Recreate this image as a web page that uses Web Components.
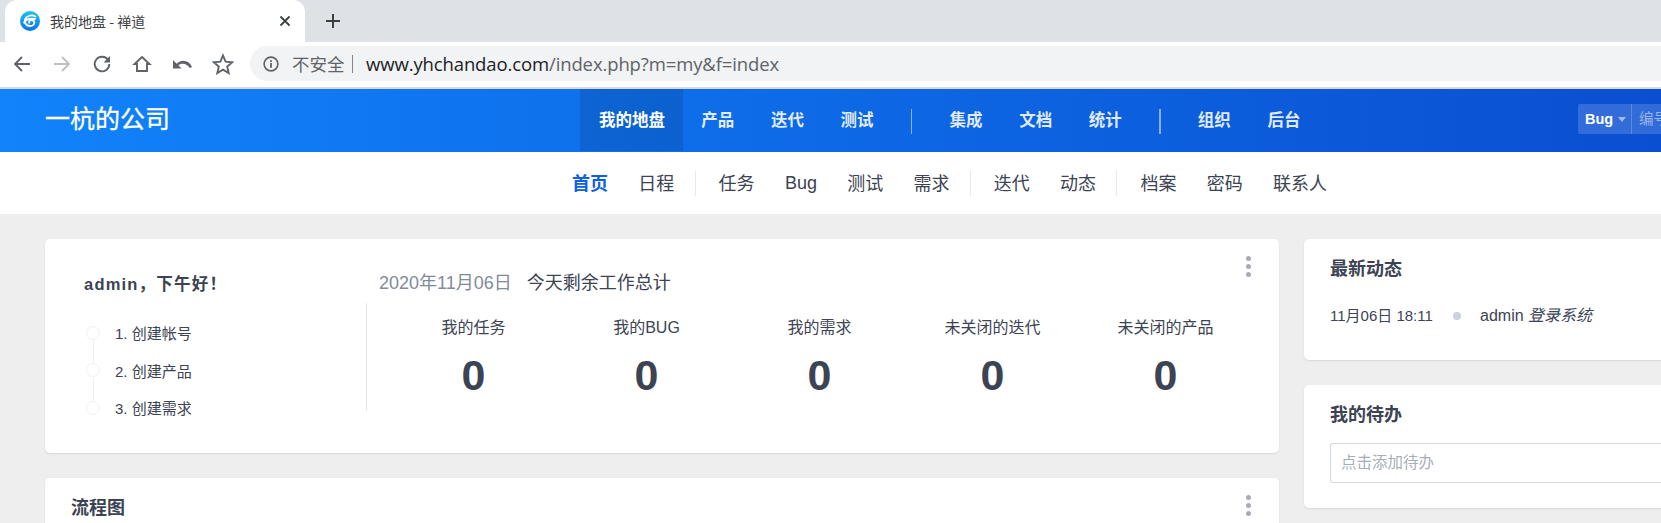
<!DOCTYPE html>
<html lang="zh"><head><meta charset="utf-8"><title>我的地盘 - 禅道</title>
<style>
html,body{margin:0;padding:0;height:523px;width:1661px;overflow:hidden;background:#eee;}
body{font-family:"Liberation Sans","Noto Sans CJK SC",sans-serif;color:#3c4353;}
</style></head><body>
<browser-chrome></browser-chrome>
<app-header>
  <top-nav-item active>我的地盘</top-nav-item><top-nav-item>产品</top-nav-item><top-nav-item>迭代</top-nav-item><top-nav-item>测试</top-nav-item>
  <nav-sep></nav-sep>
  <top-nav-item>集成</top-nav-item><top-nav-item>文档</top-nav-item><top-nav-item>统计</top-nav-item>
  <nav-sep></nav-sep>
  <top-nav-item>组织</top-nav-item><top-nav-item>后台</top-nav-item>
</app-header>
<sub-nav>
  <sub-item active>首页</sub-item><sub-item>日程</sub-item><sub-sep></sub-sep>
  <sub-item>任务</sub-item><sub-item style="padding-bottom:0">Bug</sub-item><sub-item>测试</sub-item><sub-item>需求</sub-item><sub-sep></sub-sep>
  <sub-item>迭代</sub-item><sub-item>动态</sub-item><sub-sep></sub-sep>
  <sub-item>档案</sub-item><sub-item>密码</sub-item><sub-item>联系人</sub-item>
</sub-nav>
<dash-board>
  <div slot="left">
    <panel-card menu style="height:214px">
      <welcome-block></welcome-block>
    </panel-card>
    <panel-card menu heading="流程图" style="height:100px"></panel-card>
  </div>
  <div slot="right">
    <panel-card heading="最新动态" style="height:121px">
      <activity-row></activity-row>
    </panel-card>
    <panel-card heading="我的待办" style="height:123px">
      <todo-input></todo-input>
    </panel-card>
  </div>
</dash-board>
<script>
function def(name, html, init){
  customElements.define(name, class extends HTMLElement{
    constructor(){super();this.attachShadow({mode:'open'}).innerHTML=html;if(init)init(this);}
  });
}
def('browser-chrome',`<style>
:host{display:block;height:89px;background:#fff;font-family:"Noto Sans CJK SC",sans-serif;}
.tabs{height:42px;background:#dee1e6;display:flex;align-items:center;padding-left:5px;box-sizing:border-box;}
.tab{width:300px;height:42px;background:#fff;border-radius:12px 12px 0 0;display:flex;align-items:center;box-sizing:border-box;padding:0 14px 0 15px;font-size:14px;color:#3c4043;}
.tab svg.fav{margin-right:10px;flex:none}
.tab span{flex:1;padding-bottom:1px;}
.plus{margin-left:20px;display:flex}
.bar{display:flex;align-items:center;box-sizing:border-box;padding-left:12px;border-bottom:2px solid #d9d9d9;height:47px;padding-bottom:2px;}
.ic{width:40px;display:flex;flex:none;}
.omni{margin-left:10px;flex:1;height:35px;background:#f1f3f4;border-radius:18px 0 0 18px;display:flex;align-items:center;padding-left:13px;font-size:17.5px;white-space:nowrap;}
.omni .ns{color:#5f6368;margin-left:13px;}
.omni .bar2{width:1.5px;height:18px;background:#80868b;margin:0 13px 0 7px;}
.omni .host,.omni .path{font-family:"Open Sans",sans-serif;letter-spacing:-.12px;font-size:18.5px}
.omni .host{color:#202124;}
.omni .path{color:#5f6368;}
</style>
<div class="tabs"><div class="tab">
<svg class="fav" width="20" height="20" viewBox="0 0 20 20"><defs><linearGradient id="fg" x1="0" y1="0" x2="0" y2="1"><stop offset="0" stop-color="#1cc4f0"/><stop offset="1" stop-color="#0a72e8"/></linearGradient></defs><circle cx="10" cy="10" r="10" fill="url(#fg)"/><path d="M15.5 5.5C12 3.5 6.5 4.5 5 8.5c-1 3 1 6.500 5 6.500 3 0 4.500-1.800 4.300-3.600-.2-1.700-2-2.600-3.700-2.100-1.300.4-1.900 1.500-1.400 2.400M4 11.500c2-3 6.500-4.500 11-3.500" fill="none" stroke="#fff" stroke-width="1.8" stroke-linecap="round"/></svg>
<span>我的地盘 - 禅道</span>
<svg width="12" height="12" viewBox="0 0 12 12"><path d="M1.500 1.500l9 9M10.500 1.500l-9 9" stroke="#3c4043" stroke-width="1.8" fill="none"/></svg>
</div>
<div class="plus"><svg width="16" height="16" viewBox="0 0 16 16"><path d="M8 1v14M1 8h14" stroke="#3c4043" stroke-width="2" fill="none"/></svg></div></div>
<div class="bar">
<div class="ic"><svg width="20" height="20" viewBox="0 0 20 20"><path d="M18 10H3M10 3l-7 7 7 7" fill="none" stroke="#5f6368" stroke-width="1.9"/></svg></div>
<div class="ic"><svg width="20" height="20" viewBox="0 0 20 20"><path d="M2 10h15M10 3l7 7-7 7" fill="none" stroke="#bdc1c6" stroke-width="1.9"/></svg></div>
<div class="ic"><svg width="20" height="20" viewBox="0 0 20 20"><path d="M16.200 6.200A7.300 7.300 0 1 0 17.300 10" fill="none" stroke="#5f6368" stroke-width="1.9"/><path d="M18 2v6.500h-6.500z" fill="#5f6368"/></svg></div>
<div class="ic"><svg width="20" height="20" viewBox="0 0 20 20"><path d="M10 3l7.500 7H15v7H5v-7H2.500z" fill="none" stroke="#5f6368" stroke-width="1.9"/></svg></div>
<div class="ic"><svg width="22" height="20" viewBox="0 0 22 20"><path d="M1 6v8.500h8.500l-3.200-3.200c3.800-3 9-1.500 11.500 2.700l2.200-1.100C17 6.500 10.200 4.800 4.700 9.700z" fill="#5f6368"/></svg></div>
<div class="ic" style="width:28px"><svg width="22" height="22" viewBox="0 0 22 22"><path d="M11 2.500l2.600 6.100 6.600.6-5 4.400 1.500 6.500L11 16.700l-5.700 3.400 1.500-6.500-5-4.400 6.600-.6z" fill="none" stroke="#5f6368" stroke-width="1.9"/></svg></div>
<div class="omni">
<svg width="16" height="16" viewBox="0 0 16 16"><circle cx="8" cy="8" r="6.900" fill="none" stroke="#5f6368" stroke-width="1.6"/><rect x="7.100" y="7" width="1.800" height="4.800" fill="#5f6368"/><rect x="7.100" y="4.200" width="1.800" height="1.800" fill="#5f6368"/></svg>
<span class="ns">不安全</span><i class="bar2"></i><span class="host">www.yhchandao.com</span><span class="path">/index.php?m=my&amp;f=index</span>
</div></div>`);
def('app-header',`<style>
:host{display:flex;height:63px;box-sizing:border-box;background:linear-gradient(90deg,#1183fb,#0a4fd0);color:#fff;align-items:stretch;overflow:hidden;}
.brand{width:580px;flex:none;box-sizing:border-box;padding-left:45px;font-size:25px;line-height:61px;font-weight:400;white-space:nowrap;-webkit-text-stroke:.3px #fff}
nav{display:flex;align-items:flex-start;width:998px;flex:none;}
.s{display:flex;height:30px;margin-top:15px;border-radius:2px;background:rgba(255,255,255,.16);flex:none;width:120px;font-size:14.5px;line-height:31px;}
.t{width:54px;box-sizing:border-box;padding-left:7px;font-weight:700;border-right:1px solid rgba(255,255,255,.2);flex:none;display:flex;align-items:center;gap:5px;}
.t i{border:4px solid transparent;border-top:5px solid rgba(255,255,255,.55);border-bottom:0;}
.n{padding-left:7px;color:rgba(255,255,255,.5);white-space:nowrap;}
</style><div class="brand">一杭的公司</div><nav><slot></slot></nav><div class="s"><div class="t">Bug<i></i></div><div class="n">编号</div></div>`);
def('top-nav-item',`<style>
:host{display:block;height:62px;line-height:62px;padding:0 18.300px;font-size:16.500px;color:rgba(255,255,255,.88);font-weight:700;white-space:nowrap;flex:none}
:host([active]){background:rgba(0,0,0,.11);color:#fff;padding:0 18px 0 19px;}
</style><slot></slot>`);
def('nav-sep',`<style>:host{display:block;width:1.500px;height:25px;margin:20px 19px;background:rgba(255,255,255,.5);flex:none}</style>`);
def('sub-nav',`<style>
:host{display:flex;height:62px;background:#fff;align-items:center;box-sizing:border-box;padding-left:557px;}
</style><slot></slot>`);
def('sub-item',`<style>
:host{display:block;padding:0 15px 2px;font-size:18px;color:#3c4353;white-space:nowrap;flex:none;margin-right:.3px}
:host([active]){color:#0c60e1;font-weight:700;}
</style><slot></slot>`);
def('sub-sep',`<style>:host{display:block;width:1px;height:25px;background:#e8e9ec;margin:0 8px 0 5px;flex:none}</style>`);
def('dash-board',`<style>
:host{display:grid;grid-template-columns:1234px 420px;gap:25px;padding:25px 0 0 45px;align-items:start;}
::slotted(div){display:flex;flex-direction:column;gap:25px;}
</style><slot name="left"></slot><slot name="right"></slot>`);
def('panel-card',`<style>
:host{display:block;background:#fff;border-radius:5px;box-shadow:0 1px 2px rgba(0,0,0,.1);box-sizing:border-box;position:relative;}
h3{margin:0;padding:18px 26px 0;font-size:18px;line-height:25px;font-weight:700;color:#3c4353;}
.m{position:absolute;right:28.500px;top:17px;display:flex;flex-direction:column;gap:3px;}
.m i{width:5px;height:5px;border-radius:50%;background:#a9abb8;display:block}
h3:empty{display:none}
</style><h3></h3><div class="m"><i></i><i></i><i></i></div><slot></slot>`);
document.querySelectorAll('panel-card').forEach(p=>{
  const r=p.shadowRoot; r.querySelector('h3').textContent=p.getAttribute('heading')||'';
  if(!p.hasAttribute('menu')) r.querySelector('.m').style.display='none';
});
def('welcome-block',`<style>
:host{display:flex;height:214px;box-sizing:border-box;}
.l{width:321px;flex:none;padding:34px 0 0 39px;box-sizing:border-box;}
.l h4{margin:0;font-size:16.500px;line-height:23px;font-weight:700;letter-spacing:1.200px;color:#3c4353;}
.r{flex:1;padding:31px 0 0 0;box-sizing:border-box;min-width:0;}
.d{padding-left:13px;font-size:18px;line-height:26px;white-space:nowrap;}
.d b{font-weight:400;color:#838a9d;margin-right:15px;}
.d span{color:#3c4353}
.s{display:flex;border-left:1px solid #e5e8ef;height:108px;margin-top:7px;padding-left:20px;}
step-list{margin-top:18px}
</style>
<div class="l"><h4>admin，下午好！</h4><step-list></step-list></div>
<div class="r"><div class="d"><b>2020年11月06日</b><span>今天剩余工作总计</span></div>
<div class="s"><stat-item label="我的任务"></stat-item><stat-item label="我的BUG"></stat-item><stat-item label="我的需求"></stat-item><stat-item label="未关闭的迭代"></stat-item><stat-item label="未关闭的产品"></stat-item></div></div>`);
def('step-list',`<style>
:host{display:block;position:relative;font-size:15px;color:#3c4353;}
.row{display:flex;align-items:center;height:37.500px;position:relative;}
.c{width:14px;height:14px;border-radius:50%;border:1px solid #eef0f3;box-sizing:border-box;margin:0 15px 0 2px;flex:none;background:#fff}
.row:not(:last-child)::after{content:"";position:absolute;left:8.500px;top:26px;height:25px;width:1px;background:#eef0f3;}
</style><div class="row"><i class="c"></i>1. 创建帐号</div><div class="row"><i class="c"></i>2. 创建产品</div><div class="row"><i class="c"></i>3. 创建需求</div>`);
def('stat-item',`<style>
:host{display:block;width:173px;flex:none;text-align:center;padding-top:13px;box-sizing:border-box;}
.a{font-size:16px;line-height:24px;color:#3c4353;white-space:nowrap}
.b{font-size:43px;line-height:50px;font-weight:700;color:#3c4353;margin-top:10px;}
</style><div class="a"></div><div class="b">0</div>`);
def('activity-row',`<style>
:host{display:flex;align-items:center;padding:24px 0 0 26px;font-size:15px;line-height:20px;white-space:nowrap;color:#3c4353;}
.t{width:123px;flex:none;}
.dot{width:8px;height:8px;border-radius:50%;background:#cdd1dd;margin-right:19px;flex:none;}
em{font-style:italic}
.u{font-size:16px}
</style><div class="t">11月06日 18:11</div><div class="dot"></div><div class="u">admin <em>登录系统</em></div>`);
def('todo-input',`<style>
:host{display:block;margin:15px 0 0 26px;height:40px;border:1px solid #d8d9dc;border-right:0;border-radius:3px 0 0 3px;box-sizing:border-box;line-height:38px;padding-left:10px;font-size:15.500px;color:#a9adb9;}
</style><slot>点击添加待办</slot>`);
document.querySelectorAll('welcome-block').forEach(w=>{
  w.shadowRoot.querySelectorAll('stat-item').forEach(s=>{s.shadowRoot.querySelector('.a').textContent=s.getAttribute('label');});
});
</script>
</body></html>
